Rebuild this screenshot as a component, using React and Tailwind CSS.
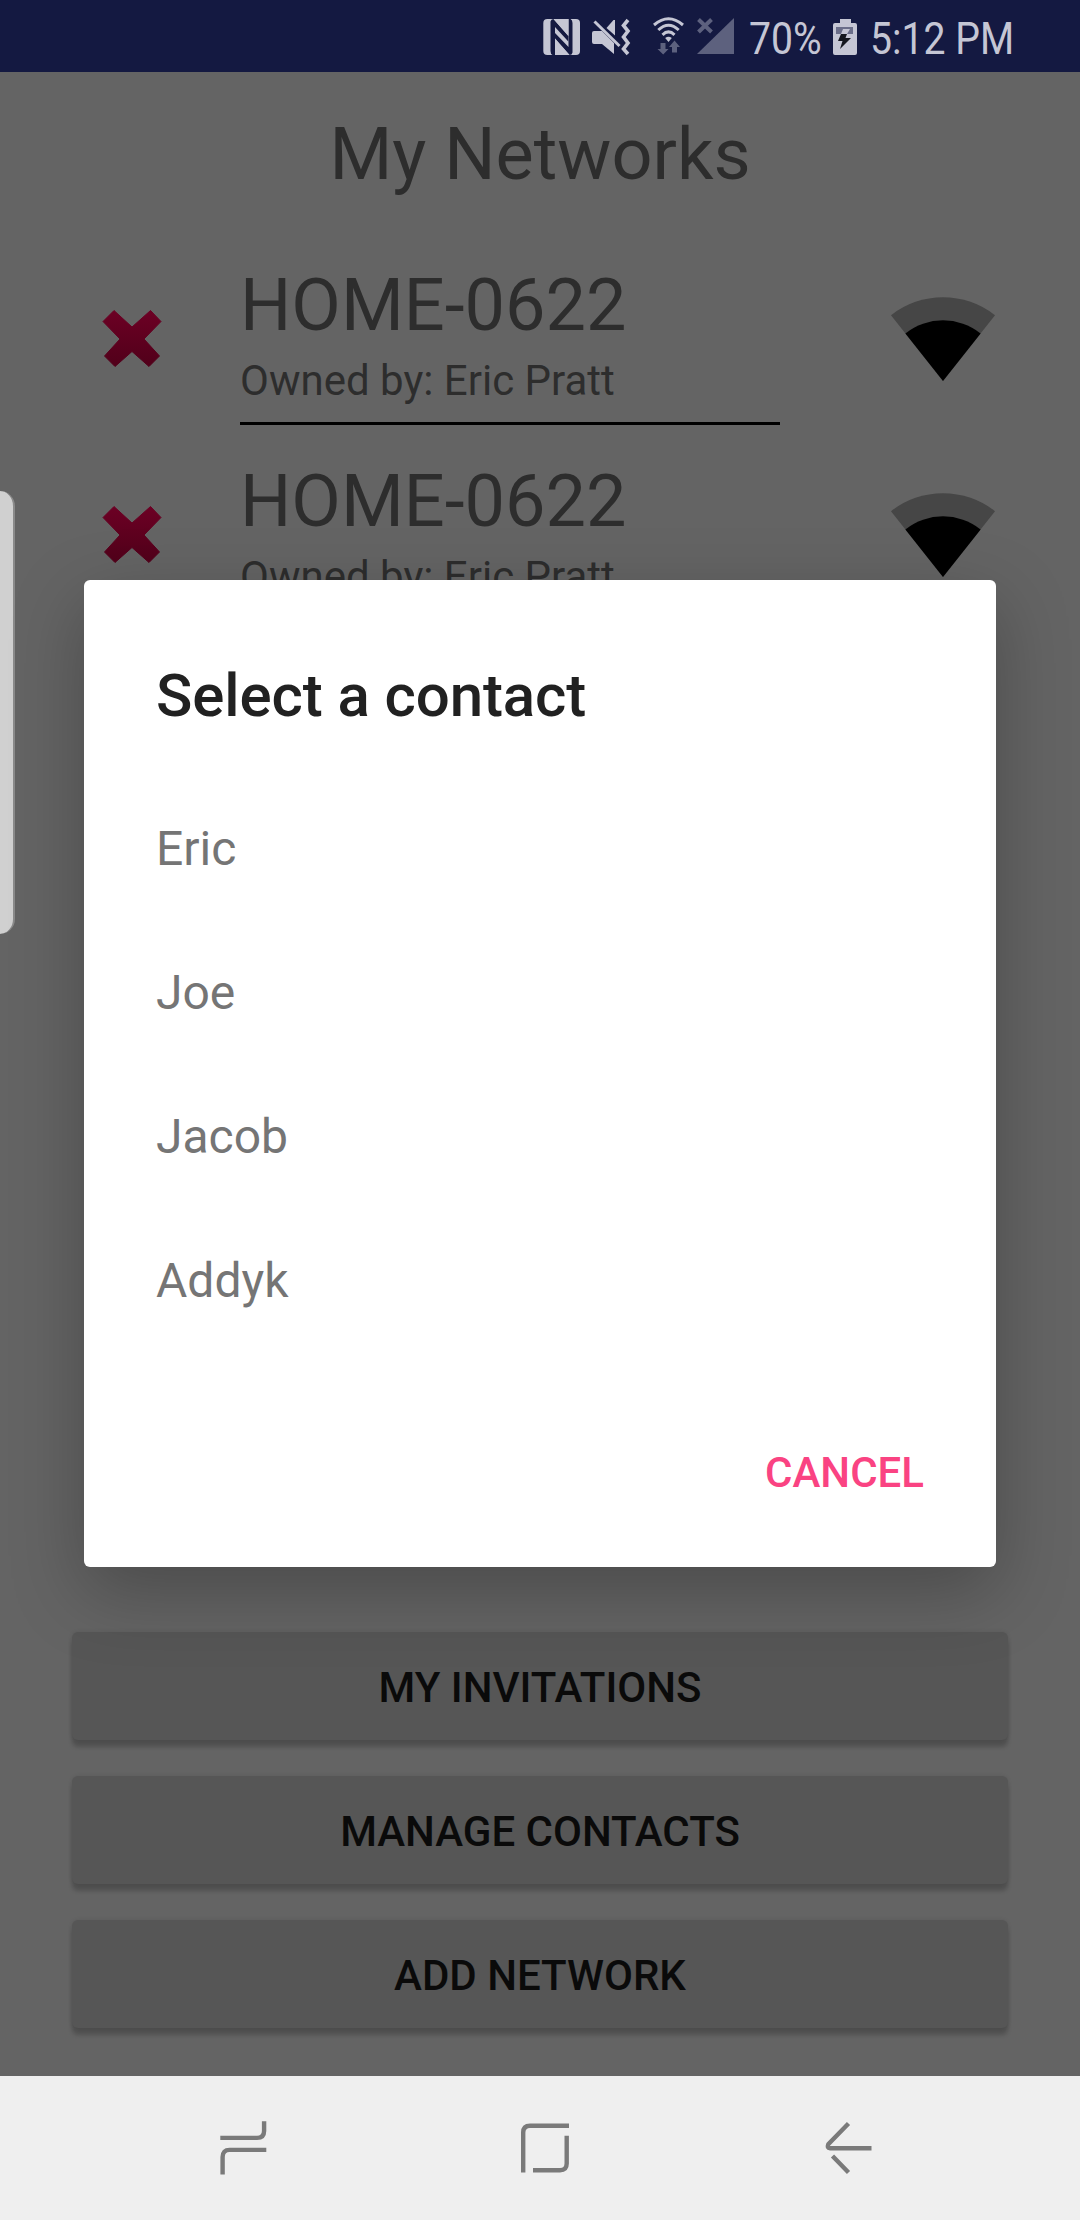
const networks = [
  { name: "HOME-0622", owner: "Eric Pratt" },
  { name: "HOME-0622", owner: "Eric Pratt" },
];
const contacts = ["Eric", "Joe", "Jacob", "Addyk"];
const actions = ["MY INVITATIONS", "MANAGE CONTACTS", "ADD NETWORK"];

function StatusBar() {
  return (
    <header className="flex h-[72px] items-start bg-[#141941] pl-[543px] text-[#c5c6d4]">
      <svg className="mt-[18px] h-[38px] w-[38px] shrink-0" viewBox="0 0 38 38" fill="none">
        <rect x="0.3" y="1" width="36.7" height="36" rx="4" fill="currentColor" />
        <path d="M7.5 3.5Q8 1 10.500 1L25.300 18V23.500L12 9V37H9.500Q7.500 36 7.500 33Z" fill="#141941" />
        <path d="M29.500 34.500Q29 37 26.500 37L12 20.500V15L25.500 29V1H27.500Q29.500 2 29.500 5Z" fill="#141941" />
        <path d="M12 20.500 26.500 37H12Z" fill="currentColor" />
        <path d="M10.500 1 25.500 18V1Z" fill="currentColor" />
      </svg>
      <svg className="ml-[11px] mt-[18px] h-[38px] w-[40px] shrink-0" viewBox="0 0 40 38" fill="none">
        <path d="M0 15Q0 13 2 13H10L22 25V36L10 26H2Q0 26 0 24Z" fill="currentColor" />
        <path d="M14.500 10 21.500 2H23V17.500Z" fill="currentColor" />
        <path d="M2.500 3.500 27.500 28" stroke="currentColor" strokeWidth="3" />
        <path d="M36 2 31.500 7.500 36 13 31.500 19 36 25 31.500 31 36 36" stroke="currentColor" strokeWidth="3.600" />
      </svg>
      <svg className="ml-[21px] mt-[16px] h-[40px] w-[34px] shrink-0" viewBox="0 0 34 40" fill="none">
        <g stroke="currentColor" strokeWidth="3">
          <path d="M1 9Q15.500-3.500 30 9" />
          <path d="M5.300 14Q15.500 4.500 25.700 14" />
          <path d="M9.500 18.800Q15.500 13 21.500 18.800" />
        </g>
        <path d="M12.200 22Q15.500 19.500 18.800 22L15.500 26Z" fill="currentColor" />
        <path d="M7.500 27H12.500V33H15.500L10.200 38.500 4.500 33H7.500ZM19 36.500V31H16L21.500 24.500 27 31H24V36.500Z" fill="#5d617e" />
      </svg>
      <svg className="ml-[10px] mt-[17px] h-[38px] w-[40px] shrink-0" viewBox="0 0 40 38">
        <path d="M37 1V37H0Z" fill="#5d617e" />
        <path d="M1.500 2.500 14.500 15M14.500 2.500 1.500 15" stroke="#5d617e" strokeWidth="4" />
      </svg>
      <span className="ml-[12px] mt-[12px] w-[70px] origin-left scale-x-[.87] whitespace-nowrap text-[45px] leading-[54px]">70%</span>
      <svg className="ml-[14px] mt-[18px] h-[38px] w-[26px] shrink-0" viewBox="0 0 26 38">
        <path d="M7 1H18V5H22Q24 5 24 7V35Q24 37 22 37H2Q0 37 0 35V7Q0 5 2 5H7Z" fill="currentColor" />
        <path d="M3 9H20V16H3Z" fill="#6b6e89" />
        <path d="M10 11H17L14 16H8Z" fill="#c5c6d4" />
        <path d="M8 16H14L12.500 20H18L7 31 9.500 23H5Z" fill="#15171f" />
      </svg>
      <span className="ml-[11px] mt-[12px] w-[150px] origin-left scale-x-[.87] whitespace-nowrap text-[45px] leading-[54px]">5:12 PM</span>
    </header>
  );
}

function DeleteIcon() {
  return (
    <svg className="mt-[79px] h-[64px] w-[64px] shrink-0" viewBox="0 0 64 64">
      <defs>
        <linearGradient id="crimson" x1="0" y1="0" x2="0" y2="1">
          <stop offset="0" stopColor="#6c0024" />
          <stop offset="1" stopColor="#51001a" />
        </linearGradient>
      </defs>
      <path
        d="M14 2.500 32 19 50.500 2.500 61 13.500 44 31 59.500 48 49 58.500 32 43.500 15 58.500 4.500 48 20 31 3 13.500Z"
        fill="url(#crimson)"
        stroke="url(#crimson)"
        strokeWidth="1"
        strokeLinejoin="round"
      />
    </svg>
  );
}

function WifiIcon() {
  return (
    <svg className="mt-[66px] h-[88px] w-[108px] shrink-0" viewBox="0 0 108 88">
      <path d="M54 86 2 20.200A84 84 0 0 1 106 20.200Z" fill="#464646" />
      <path d="M54 86 16.400 38.400A60.700 60.700 0 0 1 91.600 38.400Z" fill="#000" />
    </svg>
  );
}

function NetworkRow({ name, owner }) {
  return (
    <div className="flex h-[196px] items-start">
      <div className="flex w-[240px] pl-[100px]">
        <DeleteIcon />
      </div>
      <div className="flex w-[540px] flex-col border-b-[3px] border-black pt-[35px] pb-[16px]">
        <span className="text-[72px] leading-[84px]">{name}</span>
        <span className="mt-2 text-[42px] leading-[50px]">Owned by: {owner}</span>
      </div>
      <div className="flex pl-[109px]">
        <WifiIcon />
      </div>
    </div>
  );
}

function ContactDialog() {
  return (
    <section className="absolute left-[84px] top-[580px] flex h-[987px] w-[912px] flex-col rounded-[6px] bg-white shadow-[0_24px_72px_rgba(0,0,0,.26)]">
      <h2 className="mt-[76px] pl-[72px] text-[60px] font-medium leading-[80px] tracking-[-0.1px] text-[#212121]">Select a contact</h2>
      <ul className="mt-[41px]">
        {contacts.map((c) => (
          <li key={c} className="h-[144px] pl-[72px] text-[48px] leading-[144px] text-[#757575]">{c}</li>
        ))}
      </ul>
      <div className="mt-auto mb-[40px] flex justify-end pr-[72px]">
        <button className="h-[108px] text-[42px] font-medium leading-[108px] text-[#fa4382]">CANCEL</button>
      </div>
    </section>
  );
}

function NavBar() {
  return (
    <nav className="flex h-[144px] items-start bg-[#efefef] pl-[220px] pt-[44px]">
      <svg className="h-[56px] w-[48px]" viewBox="0 0 48 56" fill="none" stroke="#7a7a7a" strokeWidth="4.400">
        <path d="M.3 17.900H37Q44.100 17.900 44.100 11V1.300M46.300 29.900H9.500Q2.600 29.900 2.600 37V54.500" />
      </svg>
      <svg className="ml-[252px] h-[56px] w-[52px]" viewBox="0 0 52 56" fill="none" stroke="#7a7a7a" strokeWidth="4.400">
        <path d="M49 5.700H10Q3.200 5.700 3.200 12.500V52.500M46.700 15.700V43.500Q46.700 50.200 40 50.200H13" />
      </svg>
      <svg className="ml-[252px] h-[56px] w-[52px]" viewBox="0 0 52 56" fill="none" stroke="#7a7a7a" strokeWidth="4.400">
        <path d="M24.500 3.500 4.300 24.200Q2.700 28.200 6 28.200H47.500M8.500 36 24.500 52.500" />
      </svg>
    </nav>
  );
}

export default function App() {
  return (
    <div className="relative flex h-[2220px] w-[1080px] flex-col overflow-hidden bg-[#646464] font-['Roboto',sans-serif] text-[#2d2d2d]">
      <StatusBar />
      <main className="flex grow flex-col">
        <h1 className="mt-[41px] mb-[32px] text-center text-[72px] leading-[84px]">My Networks</h1>
        {networks.map((n, i) => (
          <NetworkRow key={i} {...n} />
        ))}
        <div className="mt-auto mb-[48px] flex flex-col gap-[36px] px-[72px]">
          {actions.map((a) => (
            <button
              key={a}
              className="h-[108px] rounded-[6px] bg-[#565656] pt-[3px] text-[42px] font-medium leading-[105px] text-[#0a0a0a] shadow-[0_7px_4px_rgba(0,0,0,.2),0_0_4px_rgba(0,0,0,.1)]"
            >
              {a}
            </button>
          ))}
        </div>
      </main>
      <NavBar />
      <div className="absolute left-0 top-[491px] h-[443px] w-[15px] rounded-r-[15px] border-r-2 border-[#8a8a8a] bg-[#d0d0d0]" />
      <ContactDialog />
    </div>
  );
}
